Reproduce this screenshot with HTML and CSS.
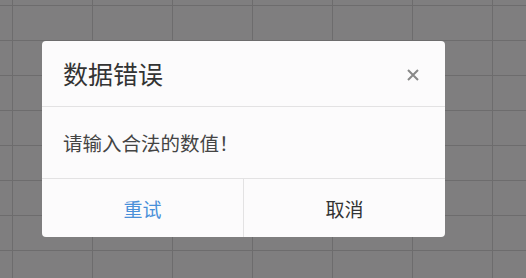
FILE: index.html
```
<!DOCTYPE html>
<html>
<head lang="zh">
    <meta charset="UTF-8">
    <title>数据错误</title>
    <link rel="stylesheet" href="styles.css">
</head>
<body>
<div class="sheet"></div>
<div class="dialog">
    <div class="dialog-head">
        <span class="dialog-title">数据错误</span>
        <span class="dialog-close">
            <svg width="12" height="12" viewBox="0 0 12 12">
                <path d="M1 1L11 11M11 1L1 11" stroke="#888" stroke-width="2"/>
            </svg>
        </span>
    </div>
    <div class="dialog-body">请输入合法的数值！</div>
    <div class="dialog-foot">
        <a href="#" class="btn btn-ok">重试</a>
        <a href="#" class="btn">取消</a>
    </div>
</div>
</body>
</html>
```

FILE: styles.css
```
html, body {
    margin: 0;
    height: 100%;
}

body {
    font-family: "Noto Sans CJK SC", "Noto Sans", sans-serif;
    background: #7f7e7f;
    overflow: hidden;
}

.sheet {
    height: 100%;
    background-image: linear-gradient(to right, #6d6c6d 1px, transparent 1px),
                      linear-gradient(to bottom, #6d6c6d 1px, transparent 1px);
    background-size: 80px 35px;
    background-position: 12px 5px;
}

.dialog {
    position: absolute;
    left: 42px;
    top: 41px;
    width: 403px;
    height: 196px;
    background: #fcfbfc;
    border-radius: 4px;
    display: flex;
    flex-direction: column;
    overflow: hidden;
}

.dialog-head {
    height: 66px;
    display: flex;
    align-items: center;
    justify-content: space-between;
    padding: 0 26px 0 21px;
    border-bottom: 1px solid #e3e2e3;
    box-sizing: border-box;
}

.dialog-title {
    font-size: 25px;
    color: #333;
    line-height: 1;
}

.dialog-close {
    display: flex;
    margin-top: 2px;
}

.dialog-body {
    height: 72px;
    display: flex;
    align-items: center;
    padding: 0 21px;
    font-size: 19.5px;
    color: #444;
    border-bottom: 1px solid #e3e2e3;
    box-sizing: border-box;
}

.dialog-foot {
    flex: 1;
    display: flex;
}

.btn {
    flex: 1;
    display: flex;
    align-items: center;
    justify-content: center;
    font-size: 19px;
    color: #333;
    text-decoration: none;
}

.btn-ok {
    color: #4a90d9;
    border-right: 1px solid #e3e2e3;
}
```
